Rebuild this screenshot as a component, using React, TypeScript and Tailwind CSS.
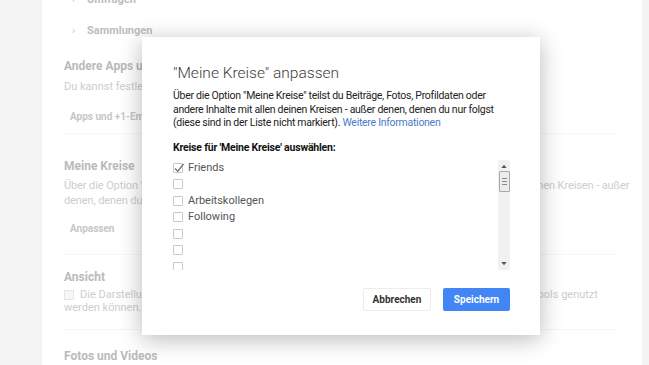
export default function App() {
  const circles = ["Friends", "", "Arbeitskollegen", "Following", "", "", ""];

  return (
    <div className="relative w-[649px] h-[365px] overflow-hidden bg-[#f4f4f4] font-['Roboto',sans-serif]">
      {/* page behind the dialog */}
      <div className="ml-[42px] w-[600px] h-full overflow-hidden whitespace-nowrap bg-white pl-[22px] pr-[24px] text-[#cdcdcd]">
        <div className="-mt-[8px] h-[16px] flex items-center text-[11px] font-bold text-[#bdbdbd]">
          <span className="w-[23px] pl-[8px] text-[#d4d4d4]">›</span>
          Umfragen
        </div>
        <div className="mt-[15px] h-[16px] flex items-center text-[11px] font-bold text-[#bdbdbd]">
          <span className="w-[23px] pl-[8px] text-[#d4d4d4]">›</span>
          Sammlungen
        </div>

        <div className="mt-[19px] h-[16px] flex items-center text-[12px] font-bold text-[#bababa]">
          Andere Apps und +1-Empfehlungen
        </div>
        <div className="mt-[6px] h-[14px] flex items-center text-[11px]">
          Du kannst festlegen, wie andere Apps und +1-Empfehlungen angezeigt werden.
        </div>
        <div className="mt-[14px] h-[16px] flex items-center pl-[6px] text-[10px] font-bold text-[#c6c6c6]">
          Apps und +1-Empfehlungen
        </div>
        <div className="mt-[9px] border-b border-[#f6f6f6]" />

        <div className="mt-[24px] h-[16px] flex items-center text-[12px] font-bold text-[#bababa]">
          Meine Kreise
        </div>
        <div className="mt-[4px] text-[11px] leading-[15px] tracking-[-0.1px]">
          <div>Über die Option "Meine Kreise" teilst du Beiträge, Fotos, Profildaten oder andere Inhalte mit allen deinen Kreisen - außer</div>
          <div>denen, denen du nur folgst (diese sind in der Liste nicht markiert). Weitere Informationen</div>
        </div>
        <div className="mt-[12px] h-[16px] flex items-center pl-[6px] text-[10px] font-bold text-[#c6c6c6]">
          Anpassen
        </div>
        <div className="mt-[18px] border-b border-[#f6f6f6]" />

        <div className="mt-[14px] h-[16px] flex items-center text-[12px] font-bold text-[#bababa]">
          Ansicht
        </div>
        <div className="mt-[3px] text-[11px] leading-[13px]">
          <div className="flex items-center">
            <span className="w-[10px] h-[10px] mr-[6px] border border-[#e6e6e6] bg-[#f6f6f6]" />
            Die Darstellung kann so angepasst werden, dass sie besser mit den Screenreadern und Hilfe-Tools genutzt
          </div>
          <div>werden können.</div>
        </div>
        <div className="mt-[15px] border-b border-[#f6f6f6]" />

        <div className="mt-[18px] h-[16px] flex items-center text-[12px] font-bold text-[#bababa]">
          Fotos und Videos
        </div>
      </div>

      {/* dialog */}
      <div className="absolute left-[142px] top-[37px] w-[398px] h-[298px] bg-white shadow-[0_4px_22px_rgba(0,0,0,0.28)] pl-[31px] pr-[30px] pt-[26px]">
        <div className="text-[15.5px] font-light leading-[20px] text-[#404040]">"Meine Kreise" anpassen</div>
        <p className="mt-[6px] text-[10.5px] leading-[13.5px] tracking-[-0.28px] text-[#222]">
          Über die Option "Meine Kreise" teilst du Beiträge, Fotos, Profildaten oder andere Inhalte mit allen deinen Kreisen - außer denen, denen du nur folgst (diese sind in der Liste nicht markiert).{" "}
          <span className="text-[#4a7cc9]">Weitere Informationen</span>
        </p>
        <div className="mt-[11px] text-[10.5px] font-bold leading-[14px] tracking-[-0.2px] text-[#111]">
          Kreise für 'Meine Kreise' auswählen:
        </div>

        <div className="mt-[5px] flex h-[110px]">
          <div className="flex-1 overflow-hidden">
            {circles.map((c, i) => (
              <div key={i} className="h-[16.5px] flex items-center text-[11px] text-[#555]">
                <span className="relative w-[10px] h-[10px] mr-[5px] border border-[#c9c9c9] rounded-[1px] bg-white shrink-0">
                  {i === 0 && (
                    <svg viewBox="0 0 12 12" className="absolute -left-[1px] -top-[2px] w-[12px] h-[12px]">
                      <path d="M2 6.5 L4.8 9.2 L10.5 2" fill="none" stroke="#777" strokeWidth="1.4" />
                    </svg>
                  )}
                </span>
                {c}
              </div>
            ))}
          </div>
          <div className="w-[12px] bg-[#f1f1f1] flex flex-col items-center">
            <svg viewBox="0 0 8 6" className="mt-[4px] w-[6px] h-[4px]">
              <path d="M0 6 L4 1 L8 6 Z" fill="#555" />
            </svg>
            <div className="mt-[3px] w-[11px] h-[21px] border border-[#a9a9a9] rounded-[1px] bg-[#ececec] flex flex-col items-center justify-center gap-[2px]">
              <span className="w-[5px] h-px bg-[#888]" />
              <span className="w-[5px] h-px bg-[#888]" />
              <span className="w-[5px] h-px bg-[#888]" />
            </div>
            <div className="flex-1" />
            <svg viewBox="0 0 8 6" className="mb-[4px] w-[6px] h-[4px]">
              <path d="M0 0 L8 0 L4 5 Z" fill="#555" />
            </svg>
          </div>
        </div>

        <div className="mt-[18px] flex justify-end gap-[12px]">
          <button className="w-[68px] h-[23px] bg-white border border-[#ececec] rounded-[2px] text-[10px] font-bold text-[#333]">
            Abbrechen
          </button>
          <button className="w-[67px] h-[23px] bg-[#4285f4] rounded-[2px] text-[10px] font-bold text-white">
            Speichern
          </button>
        </div>
      </div>
    </div>
  );
}
